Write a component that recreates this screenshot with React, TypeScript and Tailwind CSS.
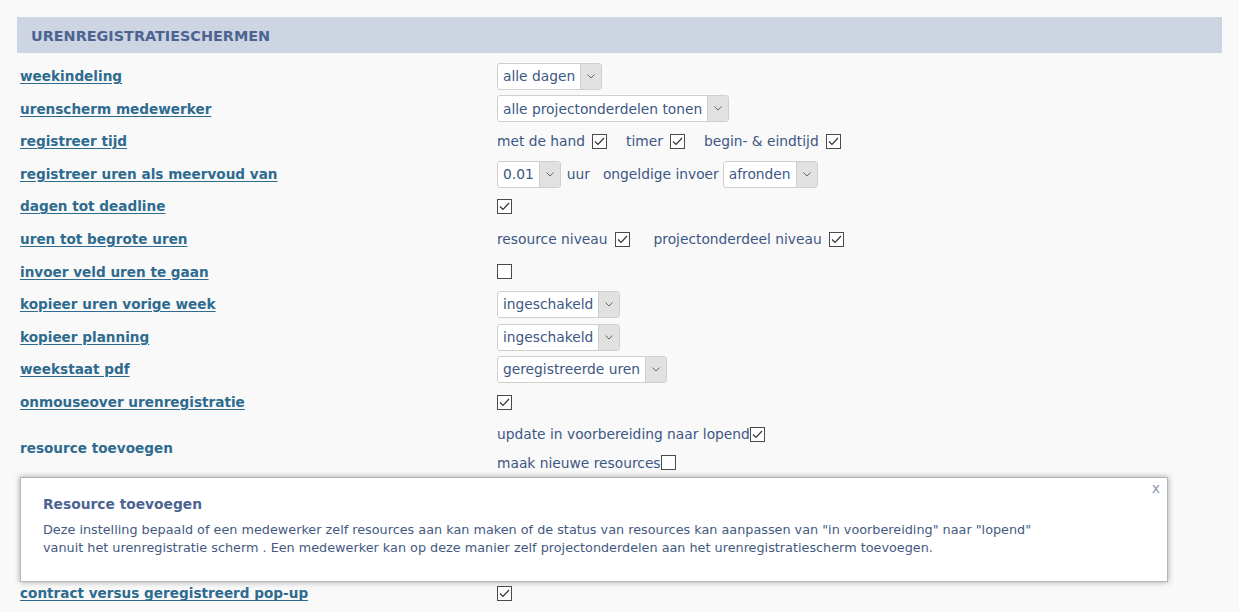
import React from "react";

const labelFont = { fontFamily: '"DejaVu Sans", Verdana, sans-serif' };

function Check({ on = true }: { on?: boolean }) {
  return (
    <span className="inline-flex h-[15px] w-[15px] items-center justify-center border border-[#4a4a4a] bg-white">
      {on && (
        <svg width="11" height="9" viewBox="0 0 11 9" fill="none">
          <path d="M1 4.5 L4 7.5 L10 1" stroke="#333" strokeWidth="1.2" />
        </svg>
      )}
    </span>
  );
}

function Select({ value }: { value: string }) {
  return (
    <span className="inline-flex h-[27px] items-stretch rounded-[3px] border border-[#cfcfcf] bg-white">
      <span className="flex items-center pl-[5px] pr-[5px]">{value}</span>
      <span className="flex w-[21px] items-center justify-center border-l border-[#cfcfcf] bg-[#e1e1e1]">
        <svg width="8" height="5" viewBox="0 0 8 5" fill="none">
          <path d="M0.5 0.5 L4 4 L7.5 0.5" stroke="#666" strokeWidth="1" />
        </svg>
      </span>
    </span>
  );
}

function Row({ label, children }: { label: string; children?: React.ReactNode }) {
  return (
    <div className="flex h-[32.6px] items-center">
      <div className="w-[480px] shrink-0 pl-[3px]">
        <a href="#" className="text-[13.6px] font-bold text-[#2e6b8f] underline underline-offset-2">
          {label}
        </a>
      </div>
      <div className="flex items-center">{children}</div>
    </div>
  );
}

export default function App() {
  return (
    <div className="relative min-h-[612px] bg-[#f9f9f9] text-[13.8px] text-[#3d5784]" style={labelFont}>
      <div className="pl-[17px] pr-[17px] pt-[17px]">
        <div className="flex h-[36px] items-center bg-[#ccd5e1] pl-[14px] pt-[3px]">
          <h2 className="text-[14.4px] font-bold uppercase text-[#4d6492]">
            Urenregistratieschermen
          </h2>
        </div>
      </div>

      <div className="pl-[17px] pt-[7px]">
        <Row label="weekindeling">
          <Select value="alle dagen" />
        </Row>
        <Row label="urenscherm medewerker">
          <Select value="alle projectonderdelen tonen" />
        </Row>
        <Row label="registreer tijd">
          <span className="mr-[7px]">met de hand</span>
          <Check />
          <span className="ml-[19px] mr-[7px]">timer</span>
          <Check />
          <span className="ml-[19px] mr-[7px]">begin- &amp; eindtijd</span>
          <Check />
        </Row>
        <Row label="registreer uren als meervoud van">
          <Select value="0.01" />
          <span className="ml-[6px]">uur</span>
          <span className="ml-[13px] mr-[4px]">ongeldige invoer</span>
          <Select value="afronden" />
        </Row>
        <Row label="dagen tot deadline">
          <Check />
        </Row>
        <Row label="uren tot begrote uren">
          <span className="mr-[7px]">resource niveau</span>
          <Check />
          <span className="ml-[24px] mr-[7px]">projectonderdeel niveau</span>
          <Check />
        </Row>
        <Row label="invoer veld uren te gaan">
          <Check on={false} />
        </Row>
        <Row label="kopieer uren vorige week">
          <Select value="ingeschakeld" />
        </Row>
        <Row label="kopieer planning">
          <Select value="ingeschakeld" />
        </Row>
        <Row label="weekstaat pdf">
          <Select value="geregistreerde uren" />
        </Row>
        <Row label="onmouseover urenregistratie">
          <Check />
        </Row>

        <div className="flex h-[60px] items-center">
          <div className="w-[480px] shrink-0 pl-[3px]">
            <span className="text-[13.6px] font-bold text-[#2e6b8f]">resource toevoegen</span>
          </div>
          <div className="flex flex-col gap-[8px]">
            <div className="flex items-center">
              <span>update in voorbereiding naar lopend</span>
              <Check />
            </div>
            <div className="flex items-center">
              <span>maak nieuwe resources</span>
              <Check on={false} />
            </div>
          </div>
        </div>

        {/* rows hidden behind the help popup */}
        <div className="h-[99px]" />

        <Row label="contract versus geregistreerd pop-up">
          <Check />
        </Row>
      </div>

      <div className="absolute left-[20px] top-[477px] h-[105px] w-[1148px] border border-[#b5b5b5] bg-white px-[22px] pt-[16px] shadow-[0_0_6px_rgba(0,0,0,0.35)]">
        <button className="absolute right-[7px] top-[0px] text-[14px] text-[#8a9bb0]">x</button>
        <h3 className="text-[13.8px] font-bold text-[#4d6492]">Resource toevoegen</h3>
        <p className="mt-[6px] max-w-[1010px] text-[12.8px] leading-[18px] text-[#44597f]">
          Deze instelling bepaald of een medewerker zelf resources aan kan maken of de status van resources kan aanpassen van "in voorbereiding" naar "lopend" vanuit het urenregistratie scherm . Een medewerker kan op deze manier zelf projectonderdelen aan het urenregistratiescherm toevoegen.
        </p>
      </div>
    </div>
  );
}
